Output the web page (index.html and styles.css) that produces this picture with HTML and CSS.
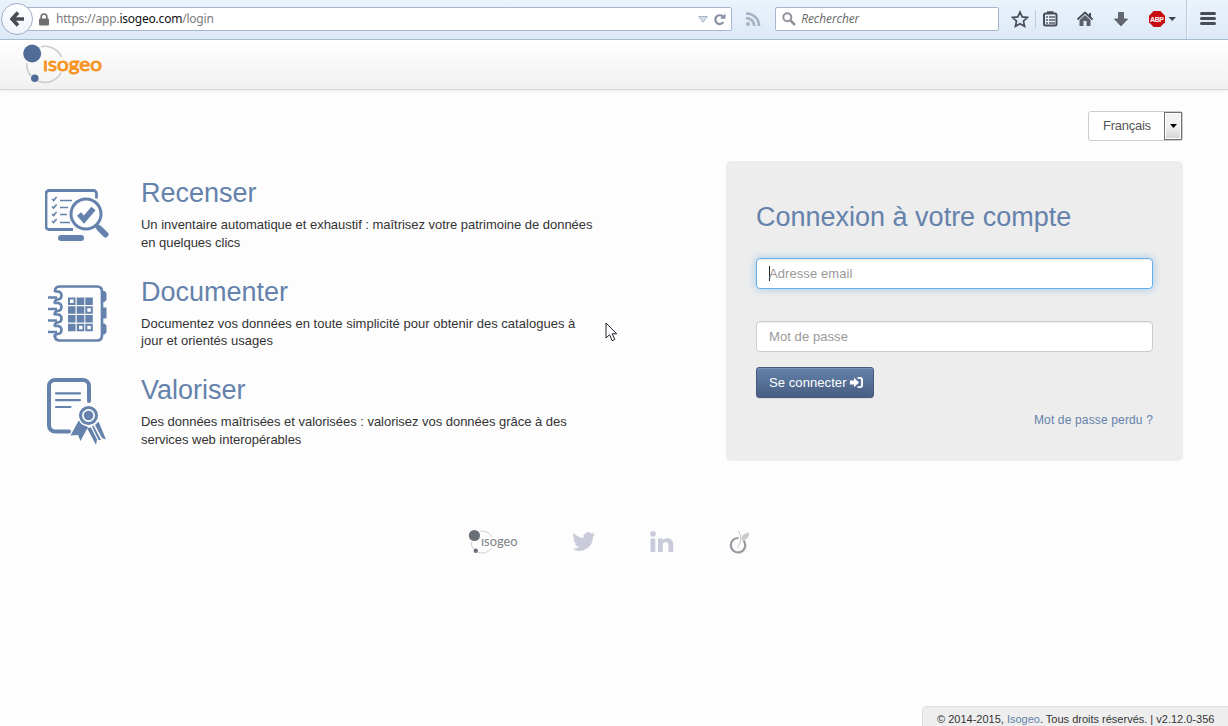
FILE: index.html
```html
<!DOCTYPE html>
<html lang="fr">
<head>
<meta charset="utf-8">
<title>Isogeo</title>
<link rel="stylesheet" href="styles.css">
</head>
<body>
<div class="toolbar">
  <div class="back"><svg width="15" height="16" viewBox="0 0 15 16"><path d="M8 1.500 2 8l6 6.500M2.500 8H14" fill="none" stroke="#484d55" stroke-width="3.600"/></svg></div>
  <div class="url">
    <svg width="10" height="13" viewBox="0 0 10 13"><path d="M2.200 6V3.800a2.800 2.800 0 0 1 5.600 0V6" fill="none" stroke="#707070" stroke-width="1.700"/><rect y="5.500" width="10" height="7" rx="1" fill="#707070"/></svg>
    <span class="address">https://app.<b>isogeo.com</b>/login</span>
    <svg class="drop" width="10" height="7" viewBox="0 0 10 7"><path d="M.7.5h8.600L5 6.300z" fill="#d9dfe8" stroke="#a7b2c2"/></svg>
    <svg width="12" height="13" viewBox="0 0 12 13"><path d="M9.300 9.200A4.400 4.400 0 1 1 8.700 3.400" fill="none" stroke="#8590a3" stroke-width="2.200"/><path d="M6 5.800h5.500V.5z" fill="#8590a3"/></svg>
  </div>
  <svg class="rss" width="15" height="14" viewBox="0 0 15 14"><g fill="none" stroke="#a7b3c3" stroke-width="2.600"><path d="M0 1.500A12.300 12.300 0 0 1 13 14"/><path d="M0 6.200A7.800 7.800 0 0 1 8.300 14"/></g><circle cx="2" cy="12" r="2" fill="#a7b3c3"/></svg>
  <div class="search">
    <svg width="14" height="14" viewBox="0 0 14 14"><circle cx="5.300" cy="5.300" r="4" fill="none" stroke="#909399" stroke-width="2"/><path d="m8.500 8.500 4.500 4.500" stroke="#909399" stroke-width="2.500"/></svg>
    <span>Rechercher</span>
  </div>
  <svg class="tools" width="229" height="39" viewBox="999 0 229 39">
    <path d="m1020 12 2.200 4.900 5.200.6-3.900 3.600 1.100 5.200-4.600-2.600-4.600 2.600 1.100-5.200-3.900-3.600 5.200-.6z" fill="none" stroke="#484d57" stroke-width="1.700"/>
    <path d="M1035.500 10v18" stroke="#bdcbd9"/>
    <rect x="1044" y="13.500" width="12.500" height="12" rx="1.500" fill="none" stroke="#484d57" stroke-width="2"/><path d="M1047 12.500h6.500" stroke="#484d57" stroke-width="2.500"/><path d="M1046 17h2m1 0h6m-9 3h2m1 0h6m-9 3h2m1 0h6" stroke="#5a5f68" stroke-width="1.300"/>
    <path d="m1077.500 19.500 7.500-7 7.500 7" fill="none" stroke="#484d57" stroke-width="1.800"/><path d="m1079.500 20 5.500-5 5.500 5v6h-4v-5h-3v5h-4z" fill="#5c6068"/><path d="M1089 13h2v4h-2z" fill="#484d57"/>
    <path d="M1118.500 12.500h5v6.500h4l-6.500 7-6.500-7h4z" fill="#61666f" stroke="#484d57" stroke-width=".7"/>
    <path d="m1153.700 11h6.600l4.700 4.700v6.600l-4.700 4.700h-6.600l-4.700-4.700v-6.600z" fill="#c70d10"/><text class="abp" x="1157" y="21.800" text-anchor="middle" textLength="14">ABP</text>
    <path d="M1168.500 17h7.500l-3.750 4z" fill="#3f444c"/>
    <path d="M1186.500 0v39" stroke="#b8c8d8"/><path d="M1187.500 0v39" stroke="#f3f8fd"/>
    <path d="M1201.500 13.500h13m-13 5h13m-13 5h13" stroke="#484d57" stroke-width="3" stroke-linecap="round"/>
  </svg>
</div>
<header class="header">
  <svg width="82" height="42" viewBox="22 43 82 42">
    <path d="M41 46.800A18 18 0 0 1 61.500 57M26.800 63A18 18 0 0 0 31 76M38.500 81.300A18 18 0 0 0 61 72.500" fill="none" stroke="#cbccd0" stroke-width="1.600"/>
    <circle cx="32.200" cy="53.500" r="9" fill="#526c98"/><circle cx="34.800" cy="78.300" r="3.800" fill="#526c98"/>
    <text class="logo" x="43" y="70.500" textLength="59" lengthAdjust="spacingAndGlyphs">ısogeo</text>
  </svg>
</header>
<main class="main">
  <div class="language">
    <div class="select"><span>Français</span><i><svg width="7" height="4" viewBox="0 0 7 4"><path d="M0 0h7L3.500 4z"/></svg></i></div>
  </div>
  <div class="columns">
    <section class="features">
      <article class="feature">
        <svg width="64" height="64" viewBox="45 181 64 64">
          <path d="M73 229.500H49a3 3 0 0 1-3-3v-33a3 3 0 0 1 3-3h44.500a3 3 0 0 1 3 3v5" fill="none" stroke="#6482ab" stroke-width="2.800"/>
          <rect x="58" y="235" width="26" height="6" rx="3" fill="#6482ab"/>
          <path d="m52 199 1.600 1.500 3-3.500m-4.600 9.500 1.600 1.500 3-3.500m-4.600 9.500 1.600 1.500 3-3.500m-4.600 9 1.600 1.500 3-3.500" fill="none" stroke="#6482ab" stroke-width="1.700"/>
          <path d="M60 200.500h12m-12 7h8m-8 7h7m-7 8h10" stroke="#6482ab" stroke-width="1.400"/>
          <circle cx="86" cy="214" r="16.500" fill="#6482ab"/><circle cx="86" cy="214" r="13.500" fill="#fff"/>
          <path d="m79 214 5 5.500 9.500-11" fill="none" stroke="#6482ab" stroke-width="5.500"/>
          <path d="m96 225 3 3" stroke="#6482ab" stroke-width="4"/><path d="m99.500 228.500 6 6" stroke="#6482ab" stroke-width="6" stroke-linecap="round"/>
        </svg>
        <div class="copy"><h2>Recenser</h2><p>Un inventaire automatique et exhaustif : maîtrisez votre patrimoine de données<br>en quelques clics</p></div>
      </article>
      <article class="feature">
        <svg width="64" height="64" viewBox="45 280 64 64">
          <path d="M102 291h2.500l2 2v7l-2 2H102zm0 16.500h4.500v11H102zm0 16h2.500l2 2v7l-2 2H102z" fill="#6482ab"/>
          <path d="M55 292v-1q0-4.500 5-4.500h37q5 0 5 5v44q0 5-5 5H60q-5 0-5-4.500v-2" fill="none" stroke="#6482ab" stroke-width="2.700"/>
          <g fill="none" stroke="#6482ab" stroke-width="2.600"><path d="M48 297.500h9M55 291.500h3q3.500.5 3.500 4t-4 4q-3 .5-3 4"/><path d="M48 309h9M54.500 303h3.500q3.500.5 3.500 4t-4 4q-3 .5-3 4"/><path d="M48 320.500h9M54.500 314.500h3.500q3.500.5 3.500 4t-4 4q-3 .5-3 4"/><path d="M48 332h9M54.500 326h3.500q3.500.5 3.500 4t-4 4q-3 .5-3 3"/></g>
          <path d="M68 297.500h7.500v7.500H68zm8.700 0h7.600v7.500h-7.600zm8.600 0h7.500v7.500h-7.500zM68 306.300h7.500v7.500H68zm8.700 0h7.600v7.500h-7.600zm8.600 0h7.500v7.500h-7.500zM68 315h7.500v7.500H68zm8.700 0h7.600v7.500h-7.600zm8.600 0h7.500v7.500h-7.500zM68 323.700h7.500v7.500H68zm8.700 0h7.600v7.500h-7.600zm8.600 0h7.500v7.500h-7.500z" fill="#6482ab"/>
          <path d="M70 299.500h3.500v3.500H70zm17.300 8.800h3.500v3.500h-3.500zM79 325.700h3.500v3.500H79zm8.300 0h3.500v3.500h-3.500z" fill="#fff"/>
        </svg>
        <div class="copy"><h2>Documenter</h2><p class="roomy">Documentez vos données en toute simplicité pour obtenir des catalogues à<br>jour et orientés usages</p></div>
      </article>
      <article class="feature">
        <svg width="64" height="68" viewBox="45 378 64 68">
          <path d="M69 431.500H55a6 6 0 0 1-6-6V386a6 6 0 0 1 6-6h28a6 6 0 0 1 6 6v15" fill="none" stroke="#6482ab" stroke-width="4" stroke-linecap="round"/>
          <path d="M56 393.300h24m-24 6.800h24M56 407h14.500" stroke="#6482ab" stroke-width="2.200" stroke-linecap="round"/>
          <path d="m79 420 9 7-7.500 14-2.500-6-7.500.5z" fill="#6482ab"/>
          <path d="m87 428 9 17 1-5.500-6-12zm5-1.500 6.500 13.500h2.500l-7.500-14.500zm3-1.500 7 13 4 1.500-7.500-18z" fill="#6482ab"/>
          <circle cx="88.500" cy="415.500" r="10.800" fill="#fdfdfd"/><circle cx="88.500" cy="415.500" r="9.500" fill="#6482ab"/><circle cx="88.500" cy="415.500" r="6.500" fill="#fff"/><circle cx="88.500" cy="415.500" r="4.800" fill="#6482ab"/>
        </svg>
        <div class="copy"><h2>Valoriser</h2><p>Des données maîtrisées et valorisées : valorisez vos données grâce à des<br>services web interopérables</p></div>
      </article>
    </section>
    <form class="login">
      <h2>Connexion à votre compte</h2>
      <div class="field focus"><i></i>Adresse email</div>
      <div class="field">Mot de passe</div>
      <div class="button"><span>Se connecter</span><svg width="13" height="11" viewBox="0 0 13 11"><path d="M0 3.500h4V.7l5 4.800-5 4.800V7.500H0zM7.500 0H10a3 3 0 0 1 3 3v5a3 3 0 0 1-3 3H7.500V9.300h2.300q1.300 0 1.300-1.300V3q0-1.300-1.300-1.300H7.500z" fill="#fff"/></svg></div>
      <a class="lost">Mot de passe perdu ?</a>
    </form>
  </div>
  <nav class="social">
    <svg width="50" height="26" viewBox="468 528 50 26"><path d="M480 530.200A11 11 0 0 1 492 536M471.200 541A11 11 0 0 0 473.500 548M478 551.300A11 11 0 0 0 491.500 547" fill="none" stroke="#d0d0d2"/><circle cx="474.400" cy="534.500" r="5.600" fill="#697078"/><circle cx="475.800" cy="549.800" r="2.200" fill="#697078"/><text class="logo-small" x="481" y="545" textLength="36.500" lengthAdjust="spacingAndGlyphs">ısogeo</text></svg>
    <svg width="24" height="20" viewBox="0 0 24 20"><path d="M23.200 2.400c-.8.400-1.700.6-2.600.7A4.700 4.700 0 0 0 22.600.6c-.9.500-1.900.9-3 1.100a4.700 4.700 0 0 0-8 4.300A13.400 13.400 0 0 1 1.900 1a4.700 4.700 0 0 0 1.500 6.300c-.8 0-1.500-.2-2.200-.6a4.700 4.700 0 0 0 3.800 4.700c-.7.200-1.400.2-2.100.1a4.700 4.700 0 0 0 4.400 3.300A9.500 9.500 0 0 1 .4 16.700 13.400 13.400 0 0 0 20.900 4.800c.9-.6 1.700-1.500 2.300-2.400z" fill="#c9cbda"/></svg>
    <svg width="24" height="22" viewBox="0 0 24 22"><path d="M.5 7.500h4.800V21H.5zM8 7.500h4.600v1.900c2.200-3.500 10.600-3.300 10.600 3.600v8h-4.800v-7.300c0-3.500-5.600-3.400-5.600 0V21H8z" fill="#c9cbda"/><circle cx="3" cy="2.900" r="2.800" fill="#c9cbda"/></svg>
    <svg width="22" height="24" viewBox="729 529 22 24"><path d="M739.500 537a7.200 7.200 0 1 0 5 2.500" fill="none" stroke="#999aa0" stroke-width="2.200"/><path d="M739.500 530q3.500 5 2 10-.7 3-3 7" fill="none" stroke="#c5c5c7"/><path d="M742.500 539.500q-1-7 7.500-8 .5 7.500-7.500 8z" fill="#cacacc"/></svg>
  </nav>
</main>
<footer class="legal">© 2014-2015, <a>Isogeo</a>. Tous droits réservés. | v2.12.0-356</footer>
<svg class="cursor" width="13" height="21" viewBox="0 0 13 21"><path d="M1 1v15l3.600-3.300 2.500 6 2.700-1.200-2.600-5.700h4.500z" fill="#fff" stroke="#20202c"/></svg>
</body>
</html>
```
FILE: styles.css
```css
* { box-sizing: border-box; }
body { margin: 0; width: 1228px; height: 726px; display: flex; flex-direction: column; overflow: hidden; background: #fdfdfd; color: #333; font: 13px/17.600px "Liberation Sans", Arial, sans-serif; }
svg { display: block; flex: none; }
h2, p { margin: 0; }
h2 { color: #6482ab; font-size: 27px; font-weight: 400; line-height: 30px; white-space: nowrap; }
.toolbar { flex: none; height: 40px; padding-bottom: 1px; display: flex; align-items: center; background: linear-gradient(#ebf3fb, #dce9f7); border-bottom: 1px solid #a9bfd5; }
.back { flex: none; width: 32px; height: 32px; margin-left: 1px; border: 1px solid #9eb0c8; border-radius: 50%; background: linear-gradient(#fff, #eef4fb); display: flex; align-items: center; justify-content: center; z-index: 1; }
.url { width: 709px; height: 24px; margin-left: -9px; padding: 0 5px 0 14px; display: flex; align-items: center; background: #fff; border: 1px solid #a6b7cb; border-radius: 2px; }
.address { margin-left: 7px; color: #7b7b7b; font: 12px/20px "Noto Sans", sans-serif; letter-spacing: -.22px; }
.address b { color: #111; font-weight: 400; }
.drop { margin: 0 6px 0 auto; }
.rss { margin-left: 14px; }
.search { width: 224px; height: 24px; margin-left: 14px; padding-left: 6px; display: flex; align-items: center; gap: 5px; background: #fff; border: 1px solid #a6b7cb; border-radius: 2px; color: #686868; font: italic 12px/20px "Open Sans", sans-serif; letter-spacing: -.1px; }
.tools { height: 39px; }
.abp { fill: #fff; font: bold 7px "Liberation Sans", sans-serif; }
.header { flex: none; height: 50px; padding: 3px 22px; background: linear-gradient(#fff, #f1f1f1); border-bottom: 1px solid #d2d2d2; box-shadow: 0 1px 4px rgba(0, 0, 0, .07); }
.logo { fill: #f7941e; stroke: #f7941e; stroke-width: .9px; font: 400 20px Lato, sans-serif; }
.logo-small { fill: #808286; font: 12.500px Lato, sans-serif; }
.main { flex: 1; padding: 21px 45px 0; }
.language { display: flex; justify-content: flex-end; }
.select { width: 95px; height: 30px; display: flex; justify-content: space-between; align-items: center; padding-left: 14px; border: 1px solid #ccc; border-radius: 3px; background: #fff; color: #555; letter-spacing: -.25px; }
.select i { width: 18px; height: 28px; display: flex; align-items: center; justify-content: center; border: 1px solid #707070; box-shadow: inset 0 0 0 1px #fff; background: linear-gradient(#f2f2f2 50%, #d4d4d4); }
.columns { display: flex; justify-content: space-between; margin-top: 20px; }
.features { padding-top: 17px; }
.feature { height: 98.500px; display: flex; gap: 32px; }
.feature > svg { margin-top: 3px; }
.copy p { margin-top: 8px; letter-spacing: -.03px; white-space: nowrap; }
.copy .roomy { letter-spacing: .02px; }
.login { width: 457px; height: 300px; padding: 41px 30px 0; display: flex; flex-direction: column; align-items: flex-start; background: #ededed; border-radius: 5px; }
.field { flex: none; width: 397px; height: 31px; margin-top: 32px; padding: 0 12px; display: flex; align-items: center; background: #fff; border: 1px solid #ccc; border-radius: 4px; color: #999; letter-spacing: .08px; box-shadow: inset 0 1px 1px rgba(0, 0, 0, .075); }
.focus { margin-top: 26px; border-color: #66afe9; box-shadow: inset 0 1px 1px rgba(0, 0, 0, .075), 0 0 8px rgba(102, 175, 233, .6); }
.field i { width: 1px; height: 15px; margin-right: -1px; background: #222; }
.button { flex: none; width: 118px; height: 31px; margin-top: 15px; padding-left: 12px; display: flex; align-items: center; gap: 3px; background: linear-gradient(#6482ab, #485e82); border: 1px solid #45597b; border-radius: 3px; color: #fff; letter-spacing: .08px; white-space: nowrap; box-shadow: inset 0 1px 0 rgba(255, 255, 255, .15), 0 1px 1px rgba(0, 0, 0, .075); }
.lost { margin: 14px 0 0 auto; color: #6482ab; font-size: 12px; letter-spacing: .15px; }
.social { display: flex; align-items: center; justify-content: center; height: 26px; margin: 55px 11px 0 0; gap: 54px; }
.legal { align-self: flex-end; flex: none; width: 306px; height: 20px; padding: 4px 0 0 14px; border: 1px solid #ddd; border-width: 1px 0 0 1px; border-radius: 5px 0 0; background: #eee; font-size: 11px; line-height: 17px; white-space: nowrap; }
.legal a { color: #6482ab; }
.cursor { position: absolute; left: 605px; top: 322px; }
```
